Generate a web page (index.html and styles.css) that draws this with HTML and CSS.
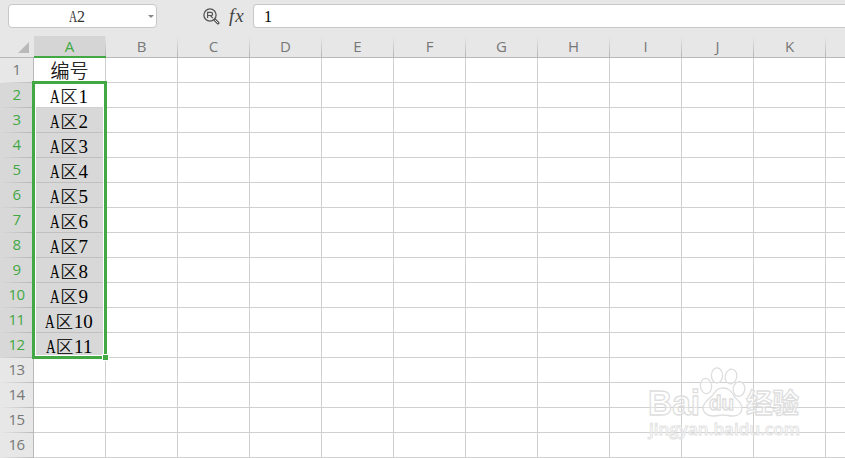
FILE: index.html
```html
<!DOCTYPE html>
<html lang="zh">
<head>
    <meta charset="utf-8">
    <title>A2</title>
    <link rel="stylesheet" href="styles.css">
</head>
<body>

<div class="toolbar">
    <div class="name-box"><span class="cell-name"><span class="ltr">A</span>2</span><span class="arrow"></span></div>
    <svg class="find-icon" width="17" height="17" viewBox="0 0 17 17">
        <circle cx="7" cy="7" r="6.1" fill="none" stroke="#555" stroke-width="1.3"/>
        <path d="M4.6 10V4.3H8a1.6 1.6 0 0 1 0 3.2H4.6M7.5 7.5l2.2 2.6" fill="none" stroke="#555" stroke-width="1.2"/>
        <path d="M11.8 11.8l3.2 3.2" stroke="#555" stroke-width="3" stroke-linecap="round"/>
        <path d="M12 12l3 3" stroke="#e7e7e7" stroke-width="1"/>
    </svg>
    <span class="fx">fx</span>
    <div class="formula">1</div>
</div>

<div class="sheet">
    <div class="col-heads">
        <div class="corner"><span class="triangle"></span></div>
        <div class="col active">A</div>
        <div class="col">B</div>
        <div class="col">C</div>
        <div class="col">D</div>
        <div class="col">E</div>
        <div class="col">F</div>
        <div class="col">G</div>
        <div class="col">H</div>
        <div class="col">I</div>
        <div class="col">J</div>
        <div class="col">K</div>
    </div>

    <div class="row"><div class="num">1</div><div class="cell title">编号</div><div class="rest"></div></div>
    <div class="row"><div class="num on">2</div><div class="cell"><span class="ltr">A</span><span class="cn">区</span>1</div><div class="rest"></div></div>
    <div class="row"><div class="num on">3</div><div class="cell sel"><span class="ltr">A</span><span class="cn">区</span>2</div><div class="rest"></div></div>
    <div class="row"><div class="num on">4</div><div class="cell sel"><span class="ltr">A</span><span class="cn">区</span>3</div><div class="rest"></div></div>
    <div class="row"><div class="num on">5</div><div class="cell sel"><span class="ltr">A</span><span class="cn">区</span>4</div><div class="rest"></div></div>
    <div class="row"><div class="num on">6</div><div class="cell sel"><span class="ltr">A</span><span class="cn">区</span>5</div><div class="rest"></div></div>
    <div class="row"><div class="num on">7</div><div class="cell sel"><span class="ltr">A</span><span class="cn">区</span>6</div><div class="rest"></div></div>
    <div class="row"><div class="num on">8</div><div class="cell sel"><span class="ltr">A</span><span class="cn">区</span>7</div><div class="rest"></div></div>
    <div class="row"><div class="num on">9</div><div class="cell sel"><span class="ltr">A</span><span class="cn">区</span>8</div><div class="rest"></div></div>
    <div class="row"><div class="num on">10</div><div class="cell sel"><span class="ltr">A</span><span class="cn">区</span>9</div><div class="rest"></div></div>
    <div class="row"><div class="num on">11</div><div class="cell sel"><span class="ltr">A</span><span class="cn">区</span>10</div><div class="rest"></div></div>
    <div class="row"><div class="num on">12</div><div class="cell sel"><span class="ltr">A</span><span class="cn">区</span>11</div><div class="rest"></div></div>
    <div class="row"><div class="num">13</div><div class="cell"></div><div class="rest"></div></div>
    <div class="row"><div class="num">14</div><div class="cell"></div><div class="rest"></div></div>
    <div class="row"><div class="num">15</div><div class="cell"></div><div class="rest"></div></div>
    <div class="row"><div class="num">16</div><div class="cell"></div><div class="rest"></div></div>

    <div class="selection"><span class="handle"></span></div>

    <svg class="watermark" width="170" height="84" viewBox="0 0 170 84">
        <g class="mark">
            <text class="logo" x="7" y="52" textLength="52" lengthAdjust="spacingAndGlyphs">Bai</text>
            <ellipse cx="65" cy="23" rx="5.6" ry="7.6" transform="rotate(-8 65 23)"/>
            <ellipse cx="76" cy="12.5" rx="5.6" ry="7.6"/>
            <ellipse cx="90" cy="13.5" rx="5.8" ry="7.4" transform="rotate(14 90 13.5)"/>
            <ellipse cx="98" cy="26" rx="5.8" ry="7.4" transform="rotate(8 98 26)"/>
            <path d="M82 25c6 0 8 3 11 8 3 4 8 7 8 12 0 5-4 8-9 8-4 0-6-1-10-1s-6 1-10 1c-5 0-10-3-10-8s5-8 9-12c4-5 5-8 11-8z"/>
            <text class="du" x="68" y="47" textLength="25" lengthAdjust="spacingAndGlyphs">du</text>
            <text class="jy" x="105" y="50" textLength="53" lengthAdjust="spacingAndGlyphs">经验</text>
            <text class="url" x="8" y="72" textLength="151" lengthAdjust="spacingAndGlyphs">jingyan.baidu.com</text>
        </g>
    </svg>
</div>

</body>
</html>
```
FILE: styles.css
```css
* {
    box-sizing: border-box;
}
body {
    margin: 0;
    height: 458px;
    overflow: hidden;
    background-color: #fff;
}
.toolbar {
    display: flex;
    height: 36px;
    padding: 4px 0 8px 8px;
    background-color: #e7e7e7;
}
.name-box {
    display: flex;
    align-items: center;
    width: 149px;
    height: 24px;
    padding-right: 2px;
    border: 1px solid #c8c8c8;
    border-radius: 4px;
    background-color: #fff;
}
.cell-name {
    flex: 1;
    padding: 1px 3px 0 0;
    text-align: center;
    font: 16px "Liberation Serif", serif;
    color: #333;
}
.ltr {
    display: inline-block;
    width: .5em;
    transform: scaleX(.7);
    transform-origin: left;
}
.arrow {
    border: 3px solid transparent;
    border-top: 3px solid #888;
    border-bottom: 0;
}
.find-icon {
    margin: 4px 0 0 46px;
}
.fx {
    width: 24px;
    margin-left: 9px;
    font: italic 19px/23px "Liberation Serif", serif;
    letter-spacing: 1px;
    color: #444;
}
.formula {
    flex: 1;
    height: 24px;
    padding: 1px 0 0 10px;
    border: 1px solid #c8c8c8;
    border-right: 0;
    border-radius: 4px 0 0 4px;
    background-color: #fff;
    font: 16px/22px "Liberation Serif", serif;
}
.sheet {
    position: relative;
}
.col-heads {
    display: flex;
    height: 22px;
    border-bottom: 1px solid #b9b9b9;
    background-color: #e7e7e7;
}
.corner {
    display: flex;
    justify-content: flex-end;
    flex: 0 0 34px;
    padding: 6px 5px 0 0;
}
.triangle {
    width: 11px;
    height: 11px;
    background-color: #b9b9b9;
    clip-path: polygon(100% 0, 100% 100%, 0 100%);
}
.col {
    flex: 0 0 72px;
    height: 21px;
    padding-right: 1px;
    text-align: center;
    font: 15px/20px "Open Sans", sans-serif;
    color: #777;
    background: linear-gradient(#e7e7e7, #b5b5b5) right / 1px 100% no-repeat;
}
.col.active {
    height: 22px;
    border-bottom: 2px solid #42a843;
    background-color: #d5d5d5;
    color: #42a843;
}
.row {
    display: flex;
    height: 25px;
}
.num {
    width: 34px;
    border-right: 1px solid #b9b9b9;
    background: linear-gradient(to right, #e7e7e7, #bcbcbc) bottom / 100% 1px no-repeat #e7e7e7;
    text-align: center;
    font: 15px/22px "Open Sans", sans-serif;
    letter-spacing: -.6px;
    color: #777;
}
.num.on {
    background-color: #d8d8d8;
    background-image: linear-gradient(to right, #d8d8d8, #b5b5b5);
    color: #42a843;
}
.cell {
    width: 72px;
    padding-right: 1px;
    border-right: 1px solid #d0d0d0;
    border-bottom: 1px solid #d0d0d0;
    text-align: center;
    white-space: nowrap;
    font: 19px/27px "Liberation Serif", "Noto Sans CJK SC", serif;
    color: #000;
}
.cell.sel {
    background-color: #d8d8d8;
    border-bottom-color: #c0c0c0;
}
.cn, .title {
    font-family: "Noto Sans CJK SC", sans-serif;
    font-weight: 300;
    -webkit-text-stroke: .2px #000;
}
.title {
    padding-right: 0;
    line-height: 23px;
}
.cn {
    display: inline-block;
    width: 19px;
    height: 24px;
    line-height: 24px;
    font-size: 17.5px;
}
.rest {
    flex: 1;
    border-bottom: 1px solid #d0d0d0;
    background: repeating-linear-gradient(to right, transparent 0 71px, #d0d0d0 71px 72px);
}
.selection {
    position: absolute;
    left: 32px;
    top: 45px;
    width: 75px;
    height: 278px;
    border: 3px solid #42a843;
    box-shadow: inset 0 0 0 1px #fff;
}
.handle {
    position: absolute;
    right: -5px;
    bottom: -5px;
    width: 7px;
    height: 7px;
    border: 1px solid #fff;
    background-color: #42a843;
}
.watermark {
    position: absolute;
    left: 641px;
    top: 327px;
}
.mark {
    fill: #fff;
    fill-opacity: .4;
    stroke: #dedede;
    stroke-width: 1.3;
    font-family: "Liberation Sans", "Noto Sans CJK SC", sans-serif;
    font-weight: bold;
}
.logo {
    font-size: 35px;
}
.du {
    font-size: 20px;
}
.jy {
    font-size: 27px;
}
.url {
    font-family: "Open Sans", sans-serif;
    font-size: 17px;
    font-weight: 600;
    stroke: #e2e2e2;
    stroke-width: .9;
}
```
